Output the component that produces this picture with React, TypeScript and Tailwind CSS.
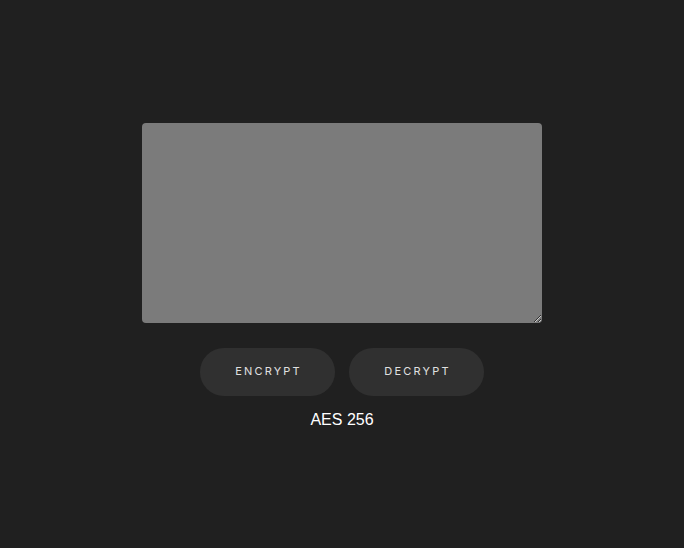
import React, { useState } from "react";

export default function App() {
    const [text, setText] = useState("");

    return (
        <div className="min-h-screen w-full bg-[#202020] flex flex-col items-center justify-center pt-[6px]" style={{ fontFamily: "Inter, 'Liberation Sans', sans-serif" }}>
            <textarea
                value={text}
                onChange={(e) => setText(e.target.value)}
                className="w-[400px] h-[200px] bg-[#7b7b7b] rounded-[4px] border-0 outline-none resize p-2 text-white"
            />
            <div className="mt-[25px] flex gap-[14px]">
                <button className="w-[135px] h-[48px] rounded-full bg-[#303030] text-[#e0e0e0] text-[11px] tracking-[2.2px] pl-[2px]">
                    ENCRYPT
                </button>
                <button className="w-[135px] h-[48px] rounded-full bg-[#303030] text-[#e0e0e0] text-[11px] tracking-[2.2px] pl-[2px]">
                    DECRYPT
                </button>
            </div>
            <div className="mt-[12px] text-white text-[16px]" style={{ fontFamily: "'Liberation Sans', Arial, sans-serif" }}>
                AES 256
            </div>
        </div>
    );
}
